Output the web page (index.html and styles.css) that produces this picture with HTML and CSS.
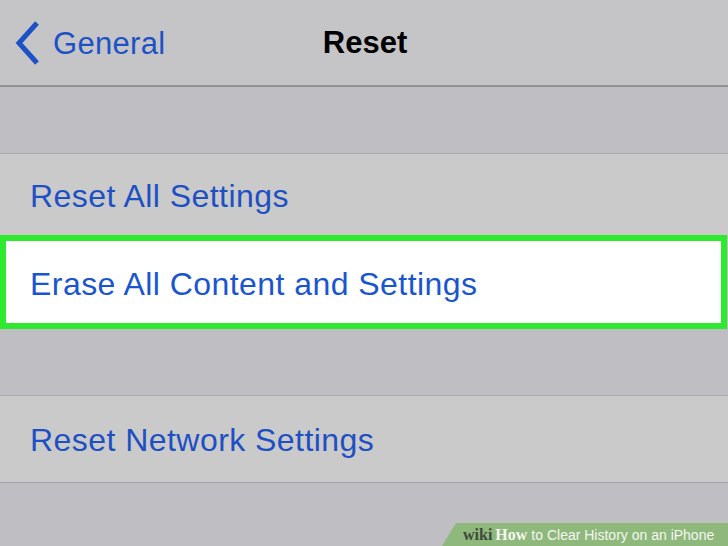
FILE: index.html
```html
<!DOCTYPE html>
<html>
<head>
<meta charset="utf-8">
<link rel="stylesheet" href="styles.css">
</head>
<body>
<div class="screen">
  <header class="nav">
    <div class="back">
      <svg class="chev" width="28" height="44" viewBox="0 0 28 44"><path d="M23 2 L5 22 L23 42" fill="none" stroke="#1d52c6" stroke-width="5" stroke-linecap="butt" stroke-linejoin="miter"/></svg>
      <span class="back-label">General</span>
    </div>
    <div class="title">Reset</div>
  </header>
  <div class="gap gap-top"></div>
  <div class="row">Reset All Settings</div>
  <div class="row highlight">Erase All Content and Settings</div>
  <div class="gap gap-mid"></div>
  <div class="row row-net">Reset Network Settings</div>
  <div class="gap gap-bottom"></div>
  <div class="banner"><span class="wiki">wiki</span><span class="how">How</span><span class="btext">to Clear History on an iPhone</span></div>
</div>
</body>
</html>
```

FILE: styles.css
```css
* { box-sizing: border-box; }
html, body { margin: 0; padding: 0; }
body {
  width: 728px;
  height: 546px;
  overflow: hidden;
  font-family: "Liberation Sans", Arial, sans-serif;
  background: #bfbfc3;
}
.screen {
  position: relative;
  width: 728px;
  height: 546px;
  display: flex;
  flex-direction: column;
  background: #bfbfc3;
}
.nav {
  height: 87px;
  flex: none;
  background: #c5c5c7;
  border-bottom: 2px solid #929296;
  position: relative;
  display: flex;
  align-items: center;
}
.back {
  display: flex;
  align-items: center;
  padding-left: 14px;
  margin-top: 0;
}
.chev { display: block; margin-right: 11px; }
.back-label {
  color: #1d52c6;
  font-size: 31px;
  letter-spacing: 0.3px;
  padding-top: 3px;
}
.title {
  position: absolute;
  left: 0;
  right: 0;
  top: 25px;
  text-align: center;
  font-weight: bold;
  font-size: 31px;
  color: #000;
  margin-left: 2px;
}
.gap { flex: none; background: #bfbfc3; }
.gap-top { height: 67px; border-bottom: 1px solid #a9a9ad; }
.row {
  flex: none;
  height: 81px;
  background: #cacaca;
  color: #1d50c4;
  font-size: 32px;
  letter-spacing: 0.45px;
  padding-left: 30px;
  display: flex;
  align-items: center;
  padding-top: 4px;
}
.highlight {
  height: 94px;
  width: 727px;
  background: #fff;
  border: 6px solid #2ee92e;
  padding-left: 24px;
  padding-top: 4px;
  color: #1a55d0;
}
.gap-mid { height: 67px; border-bottom: 1px solid #a9a9ad; }
.row-net {
  height: 87px;
  border-bottom: 1px solid #a3a3a7;
  padding-top: 2px;
}
.gap-bottom { flex: 1; }
.banner {
  position: absolute;
  right: 0;
  bottom: 0;
  width: 286px;
  height: 23px;
  background: #8fb87c;
  clip-path: polygon(14px 0, 100% 0, 100% 100%, 0 100%);
  display: flex;
  align-items: center;
  padding-left: 21px;
  white-space: nowrap;
}
.wiki {
  font-family: "Liberation Serif", serif;
  font-weight: bold;
  color: #3f4a3c;
  font-size: 16px;
  margin-right: 3px;
}
.how {
  font-family: "Liberation Serif", serif;
  font-weight: bold;
  color: #f4f7f2;
  font-size: 16px;
  margin-right: 4px;
}
.btext {
  color: #f4f7f2;
  font-family: "Liberation Sans", Arial, sans-serif;
  font-size: 14px;
}
```
